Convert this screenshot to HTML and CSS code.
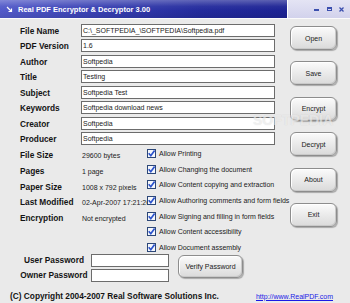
FILE: index.html
```html
<!DOCTYPE html>
<html>
<head>
<meta charset="utf-8">
<link rel="stylesheet" href="styles.css">
</head>
<body>
<div class="window">
  <svg class="defs" width="0" height="0">
    <defs>
      <symbol id="chk" viewBox="0 0 9 9">
        <rect x="0.5" y="0.5" width="8" height="8" fill="#f5f7fb" stroke="#2c4778"/>
        <path d="M1.7 4.3 L3.8 6.7 L7.6 1.4" fill="none" stroke="#2a52cc" stroke-width="1.7"/>
      </symbol>
    </defs>
  </svg>
  <div class="titlebar">
    <div class="title-main">
      <svg class="app-icon" width="7" height="7" viewBox="0 0 7 7"><path d="M1 1 L5.5 5.5 M5.5 2.5 L5.5 5.5 L2.5 5.5" fill="none" stroke="#fff" stroke-width="1.2"/></svg>
      <span class="title-text">Real PDF Encryptor &amp; Decryptor 3.00</span>
    </div>
    <div class="title-controls">
      <span class="ctl ctl-min"></span>
      <span class="ctl ctl-max"></span>
      <svg class="ctl-close" width="5" height="5" viewBox="0 0 5 5"><path d="M0.5 0.5 L4.5 4.5 M4.5 0.5 L0.5 4.5" stroke="#3b4fae" stroke-width="1.3"/></svg>
    </div>
  </div>
  <div class="main">
    <div class="left">
      <div class="fields">
        <div class="lbl">File Name</div><div class="field">C:\_SOFTPEDIA_\SOFTPEDIA\Softpedia.pdf</div>
        <div class="lbl">PDF Version</div><div class="field">1.6</div>
        <div class="lbl">Author</div><div class="field">Softpedia</div>
        <div class="lbl">Title</div><div class="field">Testing</div>
        <div class="lbl">Subject</div><div class="field">Softpedia Test</div>
        <div class="lbl">Keywords</div><div class="field">Softpedia download news</div>
        <div class="lbl">Creator</div><div class="field">Softpedia</div>
        <div class="lbl">Producer</div><div class="field">Softpedia</div>
      </div>
      <div class="details">
        <div class="info">
          <div class="lbl">File Size</div><div class="val">29600 bytes</div>
          <div class="lbl">Pages</div><div class="val">1 page</div>
          <div class="lbl">Paper Size</div><div class="val">1008 x 792 pixels</div>
          <div class="lbl">Last Modified</div><div class="val">02-Apr-2007 17:21:26</div>
          <div class="lbl">Encryption</div><div class="val">Not encrypted</div>
        </div>
        <ul class="perms">
          <li class="perm"><svg class="cb" width="9" height="9"><use href="#chk"/></svg><span>Allow Printing</span></li>
          <li class="perm"><svg class="cb" width="9" height="9"><use href="#chk"/></svg><span>Allow Changing the document</span></li>
          <li class="perm"><svg class="cb" width="9" height="9"><use href="#chk"/></svg><span>Allow Content copying and extraction</span></li>
          <li class="perm"><svg class="cb" width="9" height="9"><use href="#chk"/></svg><span>Allow Authoring comments and form fields</span></li>
          <li class="perm"><svg class="cb" width="9" height="9"><use href="#chk"/></svg><span>Allow Signing and filling in form fields</span></li>
          <li class="perm"><svg class="cb" width="9" height="9"><use href="#chk"/></svg><span>Allow Content accessibility</span></li>
          <li class="perm"><svg class="cb" width="9" height="9"><use href="#chk"/></svg><span>Allow Document assembly</span></li>
        </ul>
      </div>
      <div class="passwords">
        <div class="plbl">User Password</div><div class="field pfield"></div>
        <div class="plbl">Owner Password</div><div class="field pfield"></div>
        <button class="btn verify">Verify Password</button>
      </div>
    </div>
    <div class="buttons">
      <button class="btn">Open</button>
      <button class="btn">Save</button>
      <button class="btn">Encrypt</button>
      <button class="btn">Decrypt</button>
      <button class="btn">About</button>
      <button class="btn">Exit</button>
    </div>
  </div>
  <div class="footer">
    <span class="copyright">(C) Copyright 2004-2007 Real Software Solutions Inc.</span>
    <a class="link" href="#">http://www.RealPDF.com</a>
  </div>
  <div class="watermark">SOFTPEDIA</div>
</div>
</body>
</html>
```
FILE: styles.css
```css
html, body {
  margin: 0;
  padding: 0;
  background: #eaeaea;
}
.window {
  position: relative;
  width: 350px;
  height: 303px;
  overflow: hidden;
  background: #eaeaea;
  font-family: "Liberation Sans", Arial, sans-serif;
  color: #141414;
}
.defs {
  position: absolute;
}
.titlebar {
  display: flex;
  height: 18px;
  border-bottom: 1px solid #fbfbfb;
}
.title-main {
  flex: 1;
  display: flex;
  align-items: center;
  gap: 5px;
  padding-left: 6px;
  border-right: 1px solid #ffffff;
  background:
    linear-gradient(to bottom, rgba(255,255,255,0.28), rgba(255,255,255,0.05) 35%, rgba(0,0,0,0) 60%, rgba(0,0,0,0.08)),
    linear-gradient(to right, #525ac9, #3840b2 35%, #232a9c 70%, #1c2293);
}
.app-icon {
  flex: none;
}
.title-text {
  color: #ffffff;
  font-weight: bold;
  font-size: 7.5px;
  white-space: nowrap;
}
.title-controls {
  width: 62px;
  display: flex;
  align-items: center;
  padding-left: 26px;
  box-sizing: border-box;
  background: linear-gradient(to bottom, #e4e4f4, #d2d2ec);
}
.ctl-min {
  width: 5px;
  height: 2px;
  margin-top: 2px;
  background: #3b4fae;
}
.ctl-max {
  width: 5px;
  height: 4px;
  box-sizing: border-box;
  margin-left: 8px;
  border: 1px solid #3b4fae;
  border-top-width: 2px;
}
.ctl-close {
  margin-left: 7px;
}
.main {
  display: flex;
}
.left {
  width: 290px;
  flex: none;
}
.fields {
  display: grid;
  grid-template-columns: 61px 194px;
  grid-auto-rows: 13px;
  row-gap: 2.43px;
  padding-left: 20px;
  margin-top: 5px;
}
.lbl {
  font-weight: bold;
  font-size: 8.3px;
  white-space: nowrap;
}
.fields .lbl {
  line-height: 15px;
}
.field {
  height: 13px;
  box-sizing: border-box;
  border: 1px solid #6c6c6c;
  background: #ffffff;
  font-size: 7px;
  line-height: 11px;
  padding-left: 1px;
  white-space: nowrap;
  overflow: hidden;
  color: #1a1a1a;
}
.details {
  display: flex;
  margin-top: 4px;
}
.info {
  width: 147px;
  box-sizing: border-box;
  flex: none;
  display: grid;
  grid-template-columns: 62px 65px;
  grid-auto-rows: 9px;
  row-gap: 6.6px;
  padding-left: 20px;
  padding-top: 2.5px;
}
.info .lbl {
  line-height: 9px;
}
.val {
  font-size: 7px;
  line-height: 10px;
  white-space: nowrap;
  color: #1a1a1a;
}
.perms {
  position: relative;
  list-style: none;
  margin: 0;
  padding: 0;
  display: flex;
  flex-direction: column;
  gap: 6.7px;
}
.perm {
  display: flex;
  align-items: center;
  gap: 3px;
  height: 9px;
  font-size: 7px;
  white-space: nowrap;
  color: #1a1a1a;
}
.cb {
  flex: none;
  display: block;
}
.passwords {
  display: grid;
  grid-template-columns: 68px 78px auto;
  grid-template-rows: 13px 13px;
  column-gap: 3px;
  row-gap: 2px;
  padding-left: 20px;
  margin-top: 1.8px;
}
.plbl {
  font-weight: bold;
  font-size: 8.3px;
  line-height: 13px;
  text-align: center;
  white-space: nowrap;
}
.pfield {
  width: 78px;
}
.btn {
  box-sizing: border-box;
  width: 47px;
  height: 24px;
  padding: 0;
  border: 1px solid #8d8d8d;
  border-radius: 6px;
  background: linear-gradient(to bottom, #fbfbfb, #ececec 45%, #dadada);
  box-shadow: inset 1px 1px 0 #ffffff, inset -1px -1px 0 #c9c9c9, 1px 1px 1px rgba(0,0,0,0.28);
  font-family: "Liberation Sans", Arial, sans-serif;
  font-size: 7px;
  color: #1a1a1a;
}
.verify {
  grid-column: 3;
  grid-row: 1 / span 2;
  width: 65px;
  height: 23px;
  margin-left: 6px;
  margin-top: 1px;
}
.buttons {
  display: flex;
  flex-direction: column;
  gap: 11.4px;
  padding-top: 7px;
}
.footer {
  display: flex;
  align-items: baseline;
  padding-left: 10px;
  padding-right: 17px;
  margin-top: 9px;
}
.copyright {
  font-weight: bold;
  font-size: 8.3px;
  line-height: 10px;
  white-space: nowrap;
}
.link {
  margin-left: auto;
  font-size: 7px;
  color: #1a1ae6;
  text-decoration: underline;
  white-space: nowrap;
}
.watermark {
  position: absolute;
  left: 253px;
  top: 113px;
  font-size: 14px;
  line-height: 14px;
  font-weight: bold;
  color: rgba(255,255,255,0.55);
  text-shadow: 0 0 1px rgba(150,150,150,0.35);
  pointer-events: none;
}
```
